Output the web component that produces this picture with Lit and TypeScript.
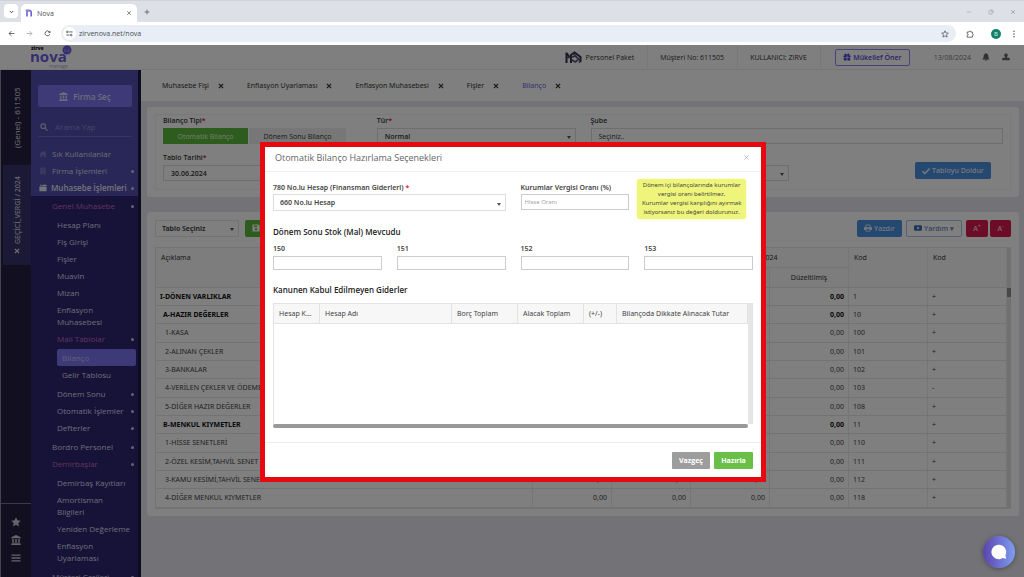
import { LitElement, html, css, svg, nothing } from "lit";
import { customElement, property } from "lit/decorators.js";
import { classMap } from "lit/directives/class-map.js";

const glyphs: Record<string, unknown> = {
  chevron: svg`<path d="M5 8.500l5 5 5-5" fill="none" stroke="currentColor" stroke-width="2.800"/>`,
  close: svg`<path d="M4 4l12 12M16 4L4 16" fill="none" stroke="currentColor" stroke-width="2.200"/>`,
  times: svg`<path d="M3 3l14 14M17 3L3 17" fill="none" stroke="currentColor" stroke-width="4.200"/>`,
  plus: svg`<path d="M10 2v16M2 10h16" fill="none" stroke="currentColor" stroke-width="2.400"/>`,
  back: svg`<path d="M18 10H3M10 3l-7 7 7 7" fill="none" stroke="currentColor" stroke-width="2.400"/>`,
  forward: svg`<path d="M2 10h15M10 3l7 7-7 7" fill="none" stroke="currentColor" stroke-width="2.400"/>`,
  reload: svg`<path d="M16.500 12A7 7 0 1 1 15 5l2 2" fill="none" stroke="currentColor" stroke-width="2.400"/><path d="M18 1.500V8h-6.500z" fill="currentColor"/>`,
  tune: svg`<g fill="none" stroke="currentColor" stroke-width="2.400"><path d="M9 5.500h10M1 14.500h9"/><circle cx="4" cy="5.500" r="2.400"/><circle cx="15" cy="14.500" r="2.400"/></g>`,
  starLine: svg`<path d="M10 2l2.400 5.400 5.900.600-4.400 3.900 1.300 5.800L10 14.700l-5.200 3 1.300-5.800L1.700 8l5.900-.600z" fill="none" stroke="currentColor" stroke-width="1.800"/>`,
  star: svg`<path d="M10 .500l2.900 6.100 6.600.900-4.800 4.700 1.200 6.700L10 15.700l-5.900 3.200 1.200-6.700L.500 7.500l6.600-.900z" fill="currentColor"/>`,
  puzzle: svg`<path d="M3 5h4.500a2.300 2.300 0 0 1 4.600 0H16v4.500a2.300 2.300 0 0 1 0 4.600V18H3v-3.800a2.300 2.300 0 0 0 0-4.600z" fill="none" stroke="currentColor" stroke-width="2"/>`,
  dots: svg`<g fill="currentColor"><circle cx="10" cy="3" r="1.800"/><circle cx="10" cy="10" r="1.800"/><circle cx="10" cy="17" r="1.800"/></g>`,
  minimize: svg`<path d="M3 10h14" stroke="currentColor" stroke-width="1.600"/>`,
  restore: svg`<g fill="none" stroke="currentColor" stroke-width="1.700"><rect x="3" y="6" width="11" height="11" rx="3"/><path d="M7 3h7a3 3 0 0 1 3 3v7"/></g>`,
  bank: svg`<path d="M10 0l9.500 4.500v2H.500v-2zM2.500 8h3v7h-3zM8.500 8h3v7h-3zM14.500 8h3v7h-3zM1.500 15.500h17v1.500h-17zM.500 17.500h19V20H.500z" fill="currentColor"/>`,
  search: svg`<g fill="none" stroke="currentColor" stroke-width="3"><circle cx="8" cy="8" r="5.700"/><path d="M12.300 12.300L19 19"/></g>`,
  home: svg`<path d="M10 2L0 11h3v7h5v-5h4v5h5v-7h3l-3.500-3V3h-2.500v2.600z" fill="currentColor"/>`,
  building: svg`<path fill-rule="evenodd" d="M3 1h14v18H3zM6 4v2.500h2.500V4zM11.500 4v2.500H14V4zM6 9v2.500h2.500V9zM11.500 9v2.500H14V9zM8.500 14.500V19h3v-4.500z" fill="currentColor"/>`,
  ledger: svg`<path d="M1 6h18v12H1zM3 2h3v3H3zM8 2h11v3H8z" fill="currentColor"/>`,
  bars: svg`<path d="M1 3h18v2.600H1zM1 8.700h18v2.600H1zM1 14.400h18V17H1z" fill="currentColor"/>`,
  bell: svg`<path d="M10 0a1.600 1.600 0 0 1 1.600 1.600C14.800 2.400 16 5 16 8c0 4 1 5.500 2.500 7v1h-17v-1C3 13.500 4 12 4 8c0-3 1.200-5.600 4.400-6.400A1.600 1.600 0 0 1 10 0zM7.500 17h5a2.500 2.500 0 0 1-5 0z" fill="currentColor"/>`,
  user: svg`<path d="M10 1a4.500 4.500 0 0 1 2.500 8.300V12h4.500c1.500 0 2.500 1 2.500 2.500V18H.500v-3.500C.500 13 1.500 12 3 12h4.500V9.300A4.500 4.500 0 0 1 10 1z" fill="currentColor"/>`,
  gift: svg`<path d="M1 6h3.500C3 4 4 1.500 6 1.500S9.500 4 10 5c.500-1 2-3.500 4-3.500S17 4 15.500 6H19v4.500h-8V6H9v4.500H1zM2 12h7v7H2zM11 12h7v7h-7z" fill="currentColor"/>`,
  check: svg`<path d="M1 10.500l6 6L19 4" fill="none" stroke="currentColor" stroke-width="4"/>`,
  print: svg`<path fill-rule="evenodd" d="M4 1h10l2 2v4h1.500A2.500 2.500 0 0 1 20 9.500V15h-4v4H4v-4H0V9.500A2.500 2.500 0 0 1 2.500 7H4zM6 3v5h8V4.500h-2.500V3zM6 13v4h8v-4z" fill="currentColor"/>`,
  video: svg`<path fill-rule="evenodd" d="M3 3h14a3 3 0 0 1 3 3v8a3 3 0 0 1-3 3H3a3 3 0 0 1-3-3V6a3 3 0 0 1 3-3zM8 6.500v7l6-3.500z" fill="currentColor"/>`,
  save: svg`<path fill-rule="evenodd" d="M1 1h15l3 3v15H1zM5 3.500v4h8v-4zM10 10a3 3 0 1 0 .01 0z" fill="currentColor"/>`,
  brand: svg`<path d="M5 19V4h7a4 4 0 0 1 3.500 4v11" fill="none" stroke="#6a5fd0" stroke-width="4"/><path d="M1.500 3.500h10" stroke="#8d84e0" stroke-width="4"/>`,
};

const icon = (name: string, cls = "") =>
  html`<svg class="icon ${cls}" viewBox="0 0 20 20" aria-hidden="true">${glyphs[name]}</svg>`;

const shared = css`
  * { box-sizing: border-box; }
  .icon { width: 8px; height: 8px; flex: none; display: block; }
  button, input, select { font: inherit; color: inherit; margin: 0; border-radius: 0; outline: none; }
  button { border: 0; padding: 0; background: none; cursor: pointer; display: flex; align-items: center; justify-content: center; gap: 2px; white-space: nowrap; }
  a { color: inherit; text-decoration: none; }
  .field { display: flex; flex-direction: column; gap: 2px; min-width: 0; }
  .field label { font-weight: 600; line-height: 11px; white-space: nowrap; }
  .field em { color: #e0102c; font-style: normal; }
  .box { width: 100%; min-width: 0; height: 16px; border: 1px solid #dcdce0; background: transparent; padding: 0 7px; appearance: none; }
  .pick { position: relative; display: block; }
  .pick select { font-weight: 600; }
  .pick::after { content: ""; position: absolute; right: 5px; top: 50%; border: 2px solid transparent; border-top: 3px solid #555; border-bottom: 0; pointer-events: none; }
`;

@customElement("browser-bar")
class BrowserBar extends LitElement {
  static styles = [shared, css`
    :host { display: block; flex: none; color: #4a4d52; font-size: 7px; }
    .strip { height: 22px; background: #dde1e7; border-top: 1px solid #cfd3d8; display: flex; align-items: flex-end; padding-left: 4px; }
    .more { width: 14px; height: 14px; background: #fff; border-radius: 4px; margin: 0 3px 4px 0; }
    .more .icon { width: 7px; height: 7px; }
    .tab { width: 116px; height: 18px; background: #fff; border-radius: 5px 5px 0 0; display: flex; align-items: center; gap: 4px; padding: 0 5px 0 4px; }
    .tab span { flex: 1; }
    .tab .close { width: 6px; height: 6px; }
    .add { height: 21px; margin-left: 7px; }
    .add .icon { width: 6px; height: 6px; }
    .win { margin-left: auto; height: 21px; display: flex; align-items: center; gap: 16px; padding-right: 8px; color: #8b9096; }
    .win .icon { width: 6px; height: 6px; }
    .tools { height: 23px; background: #fff; display: flex; align-items: center; padding: 0 6px 0 8px; }
    .nav { display: flex; gap: 11px; }
    .nav .icon { width: 7px; height: 7px; }
    .dim { color: #a5a9ae; }
    .address { flex: 1; height: 17px; margin: 0 10px; border-radius: 9px; background: #e9edf6; display: flex; align-items: center; padding: 0 7px 0 2px; gap: 3px; }
    .site { width: 13px; height: 13px; border-radius: 50%; background: #fff; }
    .site .icon { width: 7px; height: 7px; }
    .address input { flex: 1; border: 0; padding: 0; background: none; height: 13px; }
    .ext { display: flex; align-items: center; gap: 9px; }
    .me { width: 10px; height: 10px; border-radius: 50%; background: #12806a; color: #d5f0e8; font-size: 6px; line-height: 10px; text-align: center; margin-left: 8px; }
  `];
  render() {
    return html`
      <div class="strip">
        <button class="more" aria-label="Sekmeler">${icon("chevron")}</button>
        <div class="tab">${icon("brand")}<span>Nova</span>${icon("close", "close")}</div>
        <button class="add" aria-label="Yeni sekme">${icon("plus")}</button>
        <div class="win">${icon("minimize")}${icon("restore")}${icon("close")}</div>
      </div>
      <div class="tools">
        <div class="nav">
          <button aria-label="Geri">${icon("back")}</button>
          <button class="dim" aria-label="İleri">${icon("forward")}</button>
          <button aria-label="Yenile">${icon("reload")}</button>
        </div>
        <div class="address">
          <button class="site" aria-label="Site bilgisi">${icon("tune")}</button>
          <input aria-label="Adres" value="zirvenova.net/nova" />
          ${icon("starLine")}
        </div>
        <div class="ext">${icon("puzzle")}<div class="me">B</div>${icon("dots")}</div>
      </div>`;
  }
}

interface Entry { text: string; icon?: string; caret?: boolean; active?: boolean; open?: boolean; items?: Entry[]; }

const favourites: Entry[] = [
  { text: "Sık Kullanılanlar", icon: "home" },
  { text: "Firma İşlemleri", icon: "building", caret: true },
  { text: "Muhasebe İşlemleri", icon: "ledger", caret: true, open: true },
];

const menu: Entry[] = [
  { text: "Genel Muhasebe", caret: true, open: true, items: [
    { text: "Hesap Planı" }, { text: "Fiş Girişi" }, { text: "Fişler" }, { text: "Muavin" }, { text: "Mizan" },
    { text: "Enflasyon Muhasebesi" },
    { text: "Mali Tablolar", caret: true, open: true, items: [{ text: "Bilanço", active: true }, { text: "Gelir Tablosu" }] },
    { text: "Dönem Sonu", caret: true }, { text: "Otomatik İşlemler", caret: true }, { text: "Defterler", caret: true },
  ] },
  { text: "Bordro Personel", caret: true },
  { text: "Demirbaşlar", caret: true, open: true, items: [
    { text: "Demirbaş Kayıtları" }, { text: "Amortisman Bilgileri" }, { text: "Yeniden Değerleme" }, { text: "Enflasyon Uyarlaması" },
  ] },
  { text: "Müşteri Carileri", caret: true },
];

@customElement("side-menu")
class SideMenu extends LitElement {
  static styles = [shared, css`
    :host { display: flex; flex: none; width: 141px; overflow: hidden; color: #dad9e8; }
    .rail { width: 31px; background: #221e40; display: flex; flex-direction: column; align-items: center; border-left: 1px solid #8a8aa0; }
    .firm { height: 95px; font-size: 8px; display: flex; align-items: center; justify-content: center; writing-mode: vertical-rl; transform: rotate(180deg); white-space: nowrap; color: #e2e2ea; }
    .period { align-self: stretch; margin-left: 2px; height: 100px; background: #37336c; font-family: "Noto Sans", sans-serif; writing-mode: vertical-rl; transform: rotate(180deg); display: flex; align-items: center; justify-content: center; gap: 4px; white-space: nowrap; color: #e2e2ea; }
    .period .icon { width: 6px; height: 6px; }
    .short { align-self: stretch; margin-top: auto; height: 74px; border-top: 1px solid #77758c; display: flex; flex-direction: column; align-items: center; gap: 8px; padding-top: 13px; color: #c8c8d4; }
    .short .icon { width: 10px; height: 10px; }
    .main { flex: 1; background: #2c2570; border-right: 3px solid #1c1840; display: flex; flex-direction: column; min-width: 0; overflow: hidden; }
    .head { flex: none; background: #504fae; padding: 15px 6px 0 7px; height: 75px; }
    .choose { width: 100%; height: 22px; border-radius: 2px; background: #7c75ee; color: #d8d7f5; font-size: 8px; font-weight: 600; gap: 5px; }
    .choose .icon { width: 9px; height: 9px; }
    .find { display: flex; align-items: center; gap: 7px; height: 20px; margin-top: 10px; padding: 0 2px; border-bottom: 1px solid #6d6bb5; color: #bcbbe0; }
    .find input { min-width: 0; flex: 1; border: 0; padding: 0; background: none; font-size: 8px; height: 16px; }
    .find input::placeholder { color: #8f8dcc; opacity: 1; }
    ul { list-style: none; margin: 0; padding: 0; }
    li { display: block; }
    .row { display: flex; align-items: center; padding: 3px 7px 2px 0; line-height: 12px; font-size: 8px; gap: 5px; }
    .row.caret { padding-right: 4px; }
    .row span { flex: 1; }
    .row.caret::after { content: ""; width: 3px; height: 3px; border-radius: 50%; background: #c9c8de; }
    .top { background: #504fae; padding: 0 0 0 8px; }
    .top .row span { white-space: nowrap; }
    .top .row.open { gap: 4px; font-weight: 600; }
    .top .icon { width: 8px; height: 8px; color: #7a79c4; }
    .top .open, .top .open .icon { color: #e6e6f2; }
    .tree { padding: 1px 0 0 21px; }
    .tree ul { padding: 2px 0; }
    .tree > li > ul > li > .row { padding-left: 5px; }
    .tree ul ul .row { padding-left: 5px; margin-left: 5px; border-radius: 2px; }
    .tree .open { color: #c768bc; }
    .tree .active { background: #7c75ee; margin-right: 2px; color: #c3bff2; }
  `];
  private row(e: Entry) {
    return html`<a href="#" class=${classMap({ row: true, caret: !!e.caret, open: !!e.open, active: !!e.active })}>${e.icon ? icon(e.icon) : nothing}<span>${e.text}</span></a>`;
  }
  private list(items: Entry[]): unknown {
    return items.map((e) => html`<li>${this.row(e)}${e.items ? html`<ul>${this.list(e.items)}</ul>` : nothing}</li>`);
  }
  render() {
    return html`
      <div class="rail">
        <div class="firm">(Genel) - 611505</div>
        <div class="period">${icon("times")}<span>GEÇİCİ_VERGİ / 2024</span></div>
        <div class="short">${icon("star")}${icon("bank")}${icon("bars")}</div>
      </div>
      <nav class="main">
        <div class="head">
          <button class="choose">${icon("bank")}Firma Seç</button>
          <div class="find">${icon("search")}<input aria-label="Arama" placeholder="Arama Yap" /></div>
        </div>
        <ul class="top">${this.list(favourites)}</ul>
        <ul class="tree">${this.list(menu)}</ul>
      </nav>`;
  }
}

interface Line { name: string; code: string; sign: string; level: number; }
const lines: Line[] = [
  { name: "I-DÖNEN VARLIKLAR", code: "1", sign: "+", level: 0 },
  { name: "A-HAZIR DEĞERLER", code: "10", sign: "+", level: 1 },
  { name: "1-KASA", code: "100", sign: "+", level: 2 },
  { name: "2-ALINAN ÇEKLER", code: "101", sign: "+", level: 2 },
  { name: "3-BANKALAR", code: "102", sign: "+", level: 2 },
  { name: "4-VERİLEN ÇEKLER VE ÖDEME EMİRLERİ", code: "103", sign: "-", level: 2 },
  { name: "5-DİĞER HAZIR DEĞERLER", code: "108", sign: "+", level: 2 },
  { name: "B-MENKUL KIYMETLER", code: "11", sign: "+", level: 1 },
  { name: "1-HİSSE SENETLERİ", code: "110", sign: "+", level: 2 },
  { name: "2-ÖZEL KESİM,TAHVİL SENET VE BONOLARI", code: "111", sign: "+", level: 2 },
  { name: "3-KAMU KESİMİ,TAHVİL SENET VE BONOLARI", code: "112", sign: "+", level: 2 },
  { name: "4-DİĞER MENKUL KIYMETLER", code: "118", sign: "+", level: 2 },
];

@customElement("balance-page")
class BalancePage extends LitElement {
  static styles = [shared, css`
    :host { display: flex; flex-direction: column; flex: 1; min-width: 0; background: #e6e7ef; color: #333; }
    .tabs { height: 31px; background: #fff; display: flex; align-items: center; gap: 23px; padding-left: 21px; font-family: "Noto Sans", sans-serif; }
    .tab { display: flex; align-items: center; gap: 9px; }
    .tab .icon { width: 6px; height: 6px; }
    .tab.on a { color: #6a5fe0; }
    .card { background: #fff; border-radius: 3px; margin: 6px 5px 0 6px; padding: 7px 8px; }
    .card + .card { margin-top: 15px; }
    .filter { border: 1px solid #f3f3f5; height: 76px; display: grid; grid-template-columns: repeat(4, minmax(0, 1fr)); column-gap: 15px; row-gap: 8px; padding: 0 7px; align-content: start; }
    .wide { grid-column: span 2; }
    .seg { display: flex; gap: 1px; }
    .seg button { height: 16px; width: 97px; background: #efeff1; }
    .seg .on { width: 85px; background: #5cb83c; color: #e4f5dd; }
    .date { font-weight: 600; }
    .tall { align-self: end; }
    .fill { justify-self: end; align-self: end; margin: 0 12px 2px 0; width: 76px; height: 17px; border-radius: 2px; background: #4a90e2; color: #e3eefb; font-weight: 600; }
    .bar { display: flex; align-items: center; gap: 4px; height: 18px; }
    .bar .pick { width: 84px; margin-right: 2px; font-family: "Noto Sans", sans-serif; }
    .bar .box { height: 17px; border-color: #e6e6ea; padding-left: 6px; }
    .bar button { height: 17px; border-radius: 2px; font-weight: 600; }
    .save { width: 80px; background: #5cb83c; color: #fff; margin-right: auto; justify-content: flex-start; padding-left: 7px; }
    .blue { width: 45px; background: #4a90e2; color: #e3eefb; }
    .help { width: 56px; border: 1px solid #a9c1e6; color: #6c8cc0; }
    .help .icon { color: #3a6fb8; }
    .bar .zoom { width: 22px; gap: 0; background: #d8184c; color: #f6d0da; }
    .bar .zoom + .zoom { width: 21px; margin-left: -2px; }
    sup { font-size: 5px; line-height: 5px; align-self: flex-start; padding-top: 4px; }
    .grid { display: flex; margin-top: 10px; border: 1px solid #e6e6ea; border-right: 0; font-family: "Noto Sans", sans-serif; }
    .track { width: 4px; background: #e2e2e6; padding-top: 40px; }
    .track i { display: block; height: 9px; background: #8f8f92; }
    table { flex: 1; border-collapse: separate; border-spacing: 0; table-layout: fixed; width: 100%; }
    th { font-weight: 400; height: 20px; text-align: left; padding: 0 5px; background: #fbfbfb; }
    th.mid { text-align: center; }
    th.high { vertical-align: top; padding-top: 4px; }
    th, td { border-right: 1px solid #ececf0; border-bottom: 1px solid #e6e6ea; }
    td { height: 18px; padding: 0 4px; white-space: nowrap; overflow: hidden; line-height: 10px; color: #444; }
    tbody tr:nth-child(3n) td { height: 19px; }
    .num { text-align: right; width: 79px; }
    .code { width: 79px; }
    .l1 td:first-child { padding-left: 7px; }
    .l2 td:first-child { padding-left: 9px; }
    .l0 td:first-child, .l1 td:first-child, .l0 .num, .l1 .num { font-weight: 700; color: #111; }
  `];
  render() {
    const tabs = ["Muhasebe Fişi", "Enflasyon Uyarlaması", "Enflasyon Muhasebesi", "Fişler", "Bilanço"];
    return html`
      <nav class="tabs">${tabs.map((t) => html`<div class=${classMap({ tab: true, on: t === "Bilanço" })}><a href="#">${t}</a><button aria-label="Kapat">${icon("times")}</button></div>`)}</nav>
      <section class="card">
        <div class="filter">
          <div class="field"><label id="kind">Bilanço Tipi<em>*</em></label>
            <div class="seg" role="group" aria-labelledby="kind"><button class="on">Otomatik Bilanço</button><button>Dönem Sonu Bilanço</button></div></div>
          <div class="field"><label for="type">Tür<em>*</em></label><span class="pick"><select id="type" class="box"><option>Normal</option></select></span></div>
          <div class="field wide"><label for="branch">Şube</label><input id="branch" class="box" value="Seçiniz.." /></div>
          <div class="field"><label for="date">Tablo Tarihi<em>*</em></label><input id="date" class="box date" value="30.06.2024" /></div>
          <span class="pick tall"><select class="box" aria-label="Dönem"></select></span>
          <span class="pick tall"><select class="box" aria-label="Birim"></select></span>
          <button class="fill">${icon("check")}Tabloyu Doldur</button>
        </div>
      </section>
      <section class="card">
        <div class="bar">
          <span class="pick"><select class="box" aria-label="Tablo"><option>Tablo Seçiniz</option></select></span>
          <button class="save" aria-label="Kaydet">${icon("save")}</button>
          <button class="blue">${icon("print")}Yazdır</button>
          <button class="help">${icon("video")}Yardım ▾</button>
          <button class="zoom">A<sup>+</sup></button><button class="zoom">A<sup>-</sup></button>
        </div>
        <div class="grid">
          <table>
            <colgroup><col /><col class="num" /><col class="num" /><col class="num" /><col class="num" /><col class="code" /><col class="code" /></colgroup>
            <thead>
              <tr><th class="high" rowspan="2">Açıklama</th><th class="mid" colspan="2"></th><th class="mid" colspan="2">2024</th><th class="high" rowspan="2">Kod</th><th class="high" rowspan="2">Kod</th></tr>
              <tr><th class="mid"></th><th class="mid"></th><th class="mid"></th><th class="mid">Düzeltilmiş</th></tr>
            </thead>
            <tbody>${lines.map((l) => html`<tr class="l${l.level}"><td>${l.name}</td>${[0, 1, 2, 3].map(() => html`<td class="num">0,00</td>`)}<td>${l.code}</td><td>${l.sign}</td></tr>`)}</tbody>
          </table>
          <div class="track"><i></i></div>
        </div>
      </section>`;
  }
}

@customElement("options-dialog")
class OptionsDialog extends LitElement {
  @property({ type: Array }) stocks = ["150", "151", "152", "153"];
  static styles = [shared, css`
    :host { display: block; width: 506px; border: 5px solid #e60a10; background: #fff; color: #444; }
    header { display: flex; align-items: center; justify-content: space-between; height: 25px; padding: 0 11px 4px 10px; border-bottom: 1px solid #efefef; color: #666; }
    h2 { margin: 0; font-size: 9px; font-weight: 400; }
    header .icon { width: 7px; height: 7px; color: #aaa; }
    .body { padding: 10px 8px 14px; font-family: "Noto Sans", sans-serif; }
    .cols { display: grid; grid-template-columns: repeat(4, minmax(0, 1fr)); column-gap: 15px; align-items: start; }
    .cols .field { gap: 1px; }
    .wide { grid-column: span 2; }
    .cols .box { border-color: #ccc; }
    .cols .wide .box { height: 17px; border-color: #ddd; padding: 0 6px; }
    .rate { padding: 0 3px; font-size: 6px; }
    .rate::placeholder { color: #a5a5a5; opacity: 1; }
    .cols .stock { gap: 2px; }
    .stock .box { height: 14px; }
    .tip { background: #eff57a; border-radius: 3px; box-shadow: 0 0 2px #eff57a; text-align: center; font-size: 6px; line-height: 9px; height: 40px; padding: 2px 0; margin: -3px 7px 0 -7px; white-space: nowrap; }
    h3 { margin: 0; font-size: 8px; font-weight: 600; line-height: 11px; color: #222; font-family: "Open Sans", sans-serif; }
    .first { padding: 7px 0 6px; }
    .second { padding: 14px 0 8px; }
    .list { display: flex; border: 1px solid #e3e3e3; border-bottom: 0; height: 121px; }
    table { flex: 1; border-collapse: separate; border-spacing: 0; table-layout: fixed; width: 100%; align-self: flex-start; }
    th { height: 20px; padding: 0 5px; text-align: left; font-weight: 400; background: #f7f7f7; border-right: 1px solid #e3e3e3; border-bottom: 1px solid #e3e3e3; white-space: nowrap; overflow: hidden; text-overflow: ellipsis; }
    .w47 { width: 46px; } .w67 { width: 66px; } .w33 { width: 33px; } .w131 { width: 131px; }
    .side { width: 4px; background: #e6e6e6; }
    .scroll { height: 4px; margin-right: 5px; border-radius: 2px; background: #999; }
    footer { display: flex; justify-content: flex-end; gap: 4px; border-top: 1px solid #ededed; padding: 9px 8px 8px; }
    footer button { width: 38px; height: 17px; border-radius: 1px; background: #9d9d9d; color: #fff; font-weight: 700; }
    footer .go { width: 39px; background: #6abf47; }
  `];
  render() {
    return html`
      <header><h2>Otomatik Bilanço Hazırlama Seçenekleri</h2><button aria-label="Kapat">${icon("close")}</button></header>
      <div class="body">
        <div class="cols">
          <div class="field wide"><label for="acc">780 No.lu Hesap (Finansman Giderleri) <em>*</em></label><span class="pick"><select id="acc" class="box"><option>660 No.lu Hesap</option></select></span></div>
          <div class="field"><label for="rate">Kurumlar Vergisi Oranı (%)</label><input id="rate" class="box rate" placeholder="Hisse Oranı" /></div>
          <div class="tip">Dönem içi bilançolarında kurumlar<br />vergisi oranı belirtilmez.<br />Kurumlar vergisi karşılığını ayırmak<br />istiyorsanız bu değeri doldurunuz.</div>
        </div>
        <h3 class="first">Dönem Sonu Stok (Mal) Mevcudu</h3>
        <div class="cols">${this.stocks.map((s) => html`<div class="field stock"><label for="s${s}">${s}</label><input id="s${s}" class="box" /></div>`)}</div>
        <h3 class="second">Kanunen Kabul Edilmeyen Giderler</h3>
        <div class="list">
          <table><thead><tr><th class="w47">Hesap Kodu</th><th>Hesap Adı</th><th class="w67">Borç Toplam</th><th class="w67">Alacak Toplam</th><th class="w33">(+/-)</th><th class="w131">Bilançoda Dikkate Alınacak Tutar</th></tr></thead></table>
          <div class="side"></div>
        </div>
        <div class="scroll"></div>
      </div>
      <footer><button>Vazgeç</button><button class="go">Hazırla</button></footer>`;
  }
}

@customElement("app-root")
class AppRoot extends LitElement {
  static styles = [shared, css`
    :host { display: flex; flex-direction: column; height: 100vh; overflow: hidden; font: 7px/11px "Open Sans", "Noto Sans", sans-serif; }
    .page { position: relative; flex: 1; min-height: 0; display: flex; flex-direction: column; overflow: hidden; background: #fff; }
    .top { flex: none; height: 25px; display: flex; align-items: center; border-bottom: 1px solid #ececf0; padding: 0 14px 0 31px; color: #333; }
    .logo { width: 42px; height: 24px; margin-right: auto; }
    .cell { height: 25px; display: flex; align-items: center; gap: 4px; padding: 0 13px 0 12px; border-right: 1px solid #f0f0f3; }
    .cell .mark { width: 17px; height: 13px; }
    .offer { width: 75px; height: 17px; border: 1px solid #8f86ee; border-radius: 2px; color: #5145d8; margin: 0 24px 0 14px; font-weight: 600; }
    .day { color: #777; }
    .right { display: flex; gap: 12px; margin-left: 11px; color: #666; }
    .work { flex: 1; min-height: 0; display: flex; }
    .shade { position: absolute; inset: 0; background: rgba(0, 0, 0, 0.5); display: flex; justify-content: center; align-items: flex-start; padding: 97px 0 0 2px; }
    .chat { position: absolute; right: 9px; bottom: 9px; width: 32px; height: 32px; border-radius: 50%; background: linear-gradient(90deg, #5b43ae, #7f9df0); box-shadow: 0 1px 5px rgba(0, 0, 0, 0.35); }
    .chat svg { width: 16px; height: 16px; }
  `];
  render() {
    return html`
      <browser-bar></browser-bar>
      <div class="page">
        <header class="top">
          <svg class="logo" viewBox="0 0 42 24" role="img" aria-label="Zirve Nova" font-family="Open Sans, sans-serif">
            <circle cx="36" cy="5" r="4.500" fill="#6a5fe0"/><text x="33" y="7" font-size="4" fill="#c9c5f5">5.0</text>
            <text x="0" y="5" font-size="5" font-weight="800" fill="#111">zirve</text>
            <text x="-1" y="17" font-size="15" font-weight="700" fill="#6a5fe0">nova</text>
            <text x="18" y="23" font-size="5" fill="#a9a5c9">manage</text>
          </svg>
          <div class="cell"><svg class="mark" viewBox="0 0 34 26" aria-hidden="true"><path d="M3 24V3M3 4l6 8M12 24V8l7-5 12 9v10" fill="none" stroke="#33334d" stroke-width="4"/><path d="M3 13h9l8-3 7 6-6 6-9-5" fill="none" stroke="#4b4b6a" stroke-width="3"/><path d="M16 5l13 13v6" fill="none" stroke="#5c5c78" stroke-width="3"/></svg>Personel Paket</div>
          <div class="cell">Müşteri No: 611505</div>
          <div class="cell">KULLANICI: ZIRVE</div>
          <button class="offer">${icon("gift")}Mükellef Öner</button>
          <span class="day">13/08/2024</span>
          <div class="right">${icon("bell")}${icon("user")}</div>
        </header>
        <div class="work"><side-menu></side-menu><balance-page></balance-page></div>
        <div class="shade"><options-dialog></options-dialog></div>
        <button class="chat" aria-label="Sohbet"><svg viewBox="0 0 20 20" aria-hidden="true"><path d="M10 1a9 9 0 0 1 8 13l1 4.500-4.500-1A9 9 0 1 1 10 1z" fill="#fff"/></svg></button>
      </div>`;
  }
}
